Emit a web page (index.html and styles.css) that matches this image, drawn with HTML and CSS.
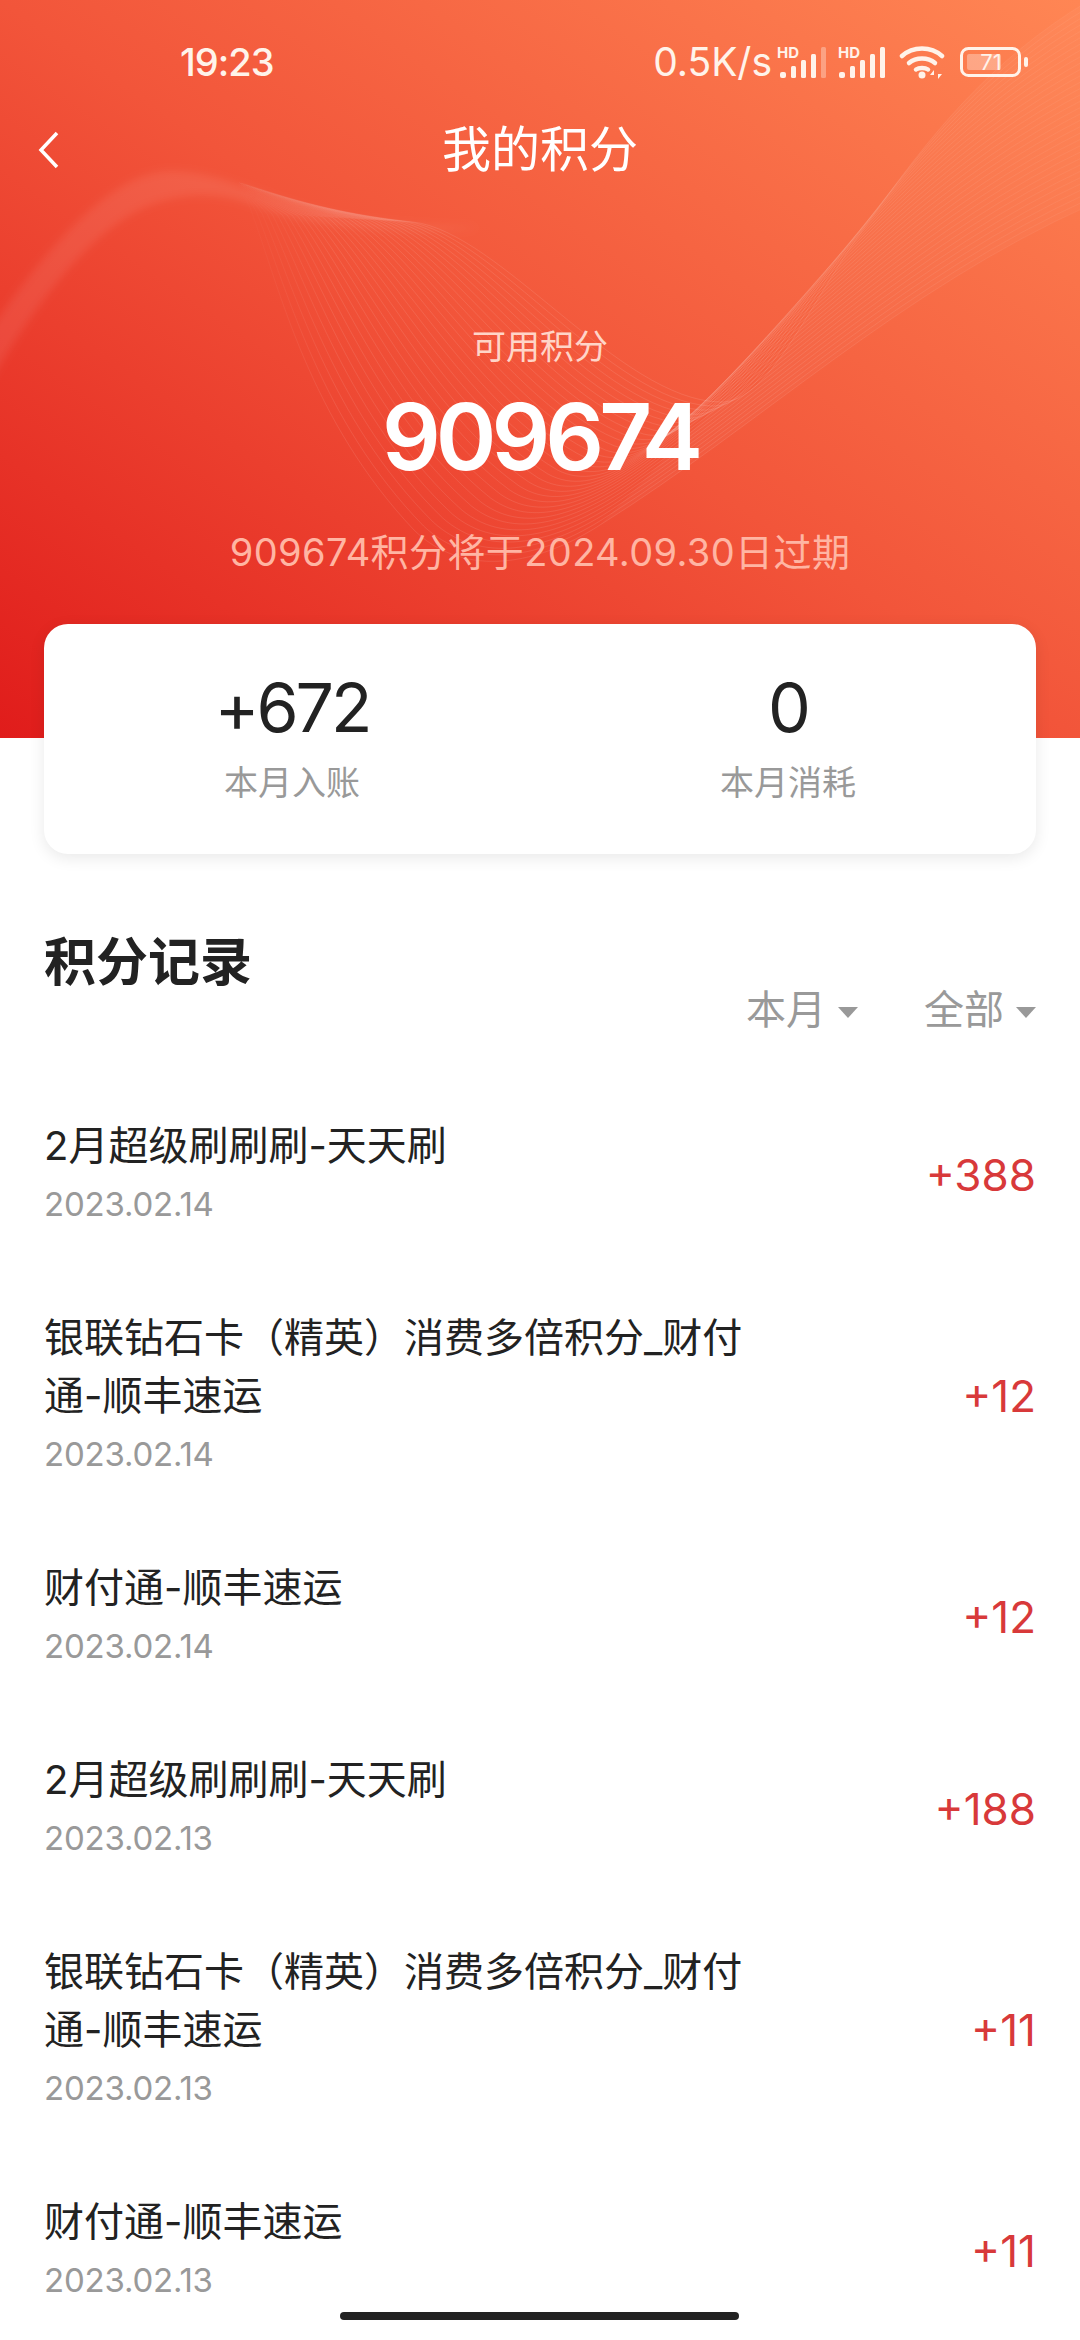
FILE: index.html
```html
<!DOCTYPE html>
<html lang="zh-CN">
<head>
<meta charset="utf-8">
<title>我的积分</title>
<link rel="stylesheet" href="styles.css">
</head>
<body>
<div class="page">
  <header class="hero">
    <svg class="wave" id="wave" viewBox="0 0 1080 738" width="1080" height="738" aria-hidden="true">
      <defs>
        <linearGradient id="lineFade" gradientUnits="userSpaceOnUse" x1="235" y1="0" x2="1080" y2="0">
          <stop offset="0" stop-color="#fff" stop-opacity="0"/>
          <stop offset=".12" stop-color="#fff" stop-opacity=".09"/>
          <stop offset=".6" stop-color="#fff" stop-opacity=".1"/>
          <stop offset="1" stop-color="#fff" stop-opacity=".05"/>
        </linearGradient>
        <filter id="soft" x="-20%" y="-20%" width="140%" height="140%">
          <feGaussianBlur stdDeviation="4"/>
        </filter>
      </defs>
    </svg>
    <div class="status">
      <span class="time">19:23</span>
      <div class="status-right">
        <span class="speed">0.5K/s</span>
        <svg class="sig sig-a" width="49" height="40" viewBox="0 -8 49 40"><text x="0" y="12" class="hd">HD</text><g fill="#fff3ea"><rect x="3" y="26" width="6" height="6" rx="2"/><rect x="14" y="20" width="5" height="12" rx="1.5"/><rect x="24" y="14" width="5" height="18" rx="1.5"/><rect x="34" y="8" width="5" height="24" rx="1.5"/><rect x="44" y="1" width="5" height="31" rx="1.5" opacity=".35"/></g></svg>
        <svg class="sig sig-b" width="48" height="40" viewBox="0 -8 48 40"><text x="0" y="12" class="hd">HD</text><g fill="#fff3ea"><rect x="1" y="26" width="6" height="6" rx="2"/><rect x="12" y="20" width="5" height="12" rx="1.5"/><rect x="22" y="14" width="5" height="18" rx="1.5"/><rect x="32" y="8" width="5" height="24" rx="1.5"/><rect x="42" y="1" width="5" height="31" rx="1.5"/></g></svg>
        <svg class="wifi" width="46" height="33" viewBox="0 0 46 33"><g fill="none" stroke="#fff3ea" stroke-width="4.500" stroke-linecap="round"><path d="M3 10C14 0 32 0 43 10"/><path d="M10 17C17 11 29 11 36 17"/><path d="M17 23.500C20 21.500 26 21.500 29 23.500"/></g><circle cx="23" cy="29" r="3.500" fill="#fff3ea"/><path d="M35 33V24l-4 5h4M39 23v10l4-5h-4" fill="#fff3ea"/></svg>
        <svg class="battery" width="68" height="36" viewBox="0 -3 68 36"><rect x="1.500" y="1.500" width="58" height="27" rx="7" fill="none" stroke="#fff3ea" stroke-width="3"/><rect x="7" y="7" width="34" height="16" rx="2" fill="#fff3ea" opacity=".35"/><rect x="64" y="10" width="4" height="10" rx="2" fill="#fff3ea"/><text x="31" y="23" class="batt-num">71</text></svg>
      </div>
    </div>
    <nav class="nav">
      <svg class="back" width="24" height="40" viewBox="0 0 24 40"><path d="M21 3L5 20l16 17" fill="none" stroke="#fff" stroke-width="3.500"/></svg>
      <h1 class="nav-title">我的积分</h1>
    </nav>
    <section class="balance">
      <div class="balance-label">可用积分</div>
      <div class="balance-num">909674</div>
      <div class="balance-exp">909674积分将于2024.09.30日过期</div>
    </section>
  </header>

  <section class="card">
    <div class="stat"><div class="stat-num">+672</div><div class="stat-label">本月入账</div></div>
    <div class="stat"><div class="stat-num">0</div><div class="stat-label">本月消耗</div></div>
  </section>

  <main class="records">
    <h2 class="records-title">积分记录</h2>
    <div class="filters">
      <span class="filter">本月<i class="caret"></i></span>
      <span class="filter">全部<i class="caret"></i></span>
    </div>
    <ul class="list">
      <li class="row"><div class="row-main"><div class="row-title">2月超级刷刷刷-天天刷</div><div class="row-date">2023.02.14</div></div><div class="row-amt">+388</div></li>
      <li class="row"><div class="row-main"><div class="row-title">银联钻石卡（精英）消费多倍积分_财付通-顺丰速运</div><div class="row-date">2023.02.14</div></div><div class="row-amt">+12</div></li>
      <li class="row"><div class="row-main"><div class="row-title">财付通-顺丰速运</div><div class="row-date">2023.02.14</div></div><div class="row-amt">+12</div></li>
      <li class="row"><div class="row-main"><div class="row-title">2月超级刷刷刷-天天刷</div><div class="row-date">2023.02.13</div></div><div class="row-amt">+188</div></li>
      <li class="row"><div class="row-main"><div class="row-title">银联钻石卡（精英）消费多倍积分_财付通-顺丰速运</div><div class="row-date">2023.02.13</div></div><div class="row-amt">+11</div></li>
      <li class="row"><div class="row-main"><div class="row-title">财付通-顺丰速运</div><div class="row-date">2023.02.13</div></div><div class="row-amt">+11</div></li>
    </ul>
  </main>
  <div class="home-bar"></div>
</div>
<script src="wave.js"></script>
</body>
</html>
```
FILE: styles.css
```css
* { box-sizing: border-box; }
html, body { margin: 0; padding: 0; }
body {
  width: 1080px;
  height: 2340px;
  overflow: hidden;
  background: #fff;
  font-family: Inter, "Noto Sans CJK SC", sans-serif;
  color: #222;
}
.page { position: relative; width: 1080px; height: 2340px; overflow: hidden; }

.hero {
  position: relative;
  height: 738px;
  padding-top: 38px;
  background: linear-gradient(to top right, #e01c1b 0%, #f2553a 50%, #ff8654 100%);
  color: #fff;
}
.wave { position: absolute; left: 0; top: 0; }

.status {
  position: relative;
  display: flex;
  justify-content: space-between;
  align-items: center;
  height: 48px;
  padding: 0 52px 0 180px;
  color: #fff3ea;
}
.time { font-size: 38px; font-weight: 500; line-height: 48px; letter-spacing: -1px; }
.status-right { display: flex; align-items: center; }
.speed { font-size: 39px; line-height: 48px; }
.sig-a { margin: -8px 0 0 5px; }
.sig-b { margin: -8px 0 0 12px; }
.wifi { margin-left: 13px; }
.battery { margin-left: 15px; }
.hd { font: 700 15px Inter, sans-serif; fill: #fff3ea; }
.batt-num { font: 400 22px Inter, sans-serif; fill: #fff3ea; text-anchor: middle; }

.nav {
  position: relative;
  display: flex;
  justify-content: center;
  align-items: center;
  height: 92px;
  margin-top: 18px;
}
.back { position: absolute; left: 36px; top: 26px; }
.nav-title { margin: 0; font-size: 49px; font-weight: 400; line-height: 92px; }

.balance { position: relative; margin-top: 126px; text-align: center; }
.balance-label { font-size: 34px; line-height: 50px; color: #ffd5c8; }
.balance-num { margin-top: 5px; font-size: 92px; font-weight: 600; line-height: 120px; letter-spacing: -5px; color: #fff; }
.balance-exp { margin-top: 25px; font-size: 38px; line-height: 60px; letter-spacing: .4px; color: #ffb5a3; }

.card {
  position: relative;
  display: flex;
  width: 992px;
  height: 230px;
  margin: -114px 0 0 44px;
  padding-top: 46px;
  background: #fff;
  border-radius: 24px;
  box-shadow: 0 4px 16px rgba(0, 0, 0, .09);
}
.stat { flex: 1; text-align: center; }
.stat-num { font-size: 68px; line-height: 74px; letter-spacing: -3px; color: #222; }
.stat-label { margin-top: 17px; font-size: 34px; line-height: 44px; color: #999; }

.records { padding: 83px 44px 0; }
.records-title { margin: 0; font-size: 52px; font-weight: 700; line-height: 52px; color: #222; }
.filters { display: flex; justify-content: flex-end; gap: 66px; height: 42px; margin-bottom: 48px; }
.filter { display: flex; align-items: center; font-size: 40px; line-height: 42px; color: #999; }
.caret {
  width: 0;
  height: 0;
  margin: 4px 0 0 12px;
  border-left: 10px solid transparent;
  border-right: 10px solid transparent;
  border-top: 11px solid #999;
}

.list { margin: 0; padding: 0; list-style: none; }
.row { display: flex; justify-content: space-between; align-items: center; padding: 38px 0; }
.row-main { width: 720px; }
.row-title { font-size: 40px; line-height: 58px; color: #222; }
.row-date { font-size: 33px; line-height: 58px; letter-spacing: -.2px; color: #999; }
.row-amt { font-size: 44px; line-height: 58px; color: #d8393a; }

.home-bar {
  position: absolute;
  left: 340px;
  bottom: 20px;
  width: 399px;
  height: 8px;
  border-radius: 4px;
  background: #222;
}
```
FILE: wave.js
```js
(function () {
  var svg = document.getElementById('wave');
  var NS = 'http://www.w3.org/2000/svg';
  var top = [180,170, 230,170, 280,208, 413,222, 500,232, 620,400, 720,402, 770,404, 810,300, 867,224, 930,135, 990,60, 1090,0];
  var bot = [180,170, 225,172, 245,190, 252,213, 280,290, 310,420, 414,530, 460,575, 530,570, 600,525, 760,425, 900,290, 1090,205];
  function lerp(t) { return top.map(function (v, i) { return v + (bot[i] - v) * t; }); }
  function d(p) {
    return 'M' + p[0] + ' ' + p[1] + 'C' + p.slice(2).map(function (v) { return v.toFixed(1); }).join(' ');
  }
  function add(dStr, attrs) {
    var el = document.createElementNS(NS, 'path');
    el.setAttribute('d', dStr);
    Object.keys(attrs).forEach(function (k) { el.setAttribute(k, attrs[k]); });
    svg.appendChild(el);
  }
  // Soft pale band that follows the crest on the left.
  add('M-20 345C40 255 110 170 172 171C230 172 270 203 345 217C400 226 450 226 480 228C400 236 300 225 255 206C215 190 170 192 130 215C80 245 30 310 -20 400Z',
    { fill: '#fff', 'fill-opacity': '.08', filter: 'url(#soft)' });
  // Wash inside the rising fan at the upper right.
  add('M600 525C760 425 900 290 1090 205L1090 0C990 60 930 135 867 224C810 300 770 404 720 402Z',
    { fill: '#fff', 'fill-opacity': '.03' });
  var n = 32;
  for (var i = 0; i <= n; i++) {
    add(d(lerp(i / n)), { fill: 'none', stroke: 'url(#lineFade)', 'stroke-width': '1' });
  }
})();
```
